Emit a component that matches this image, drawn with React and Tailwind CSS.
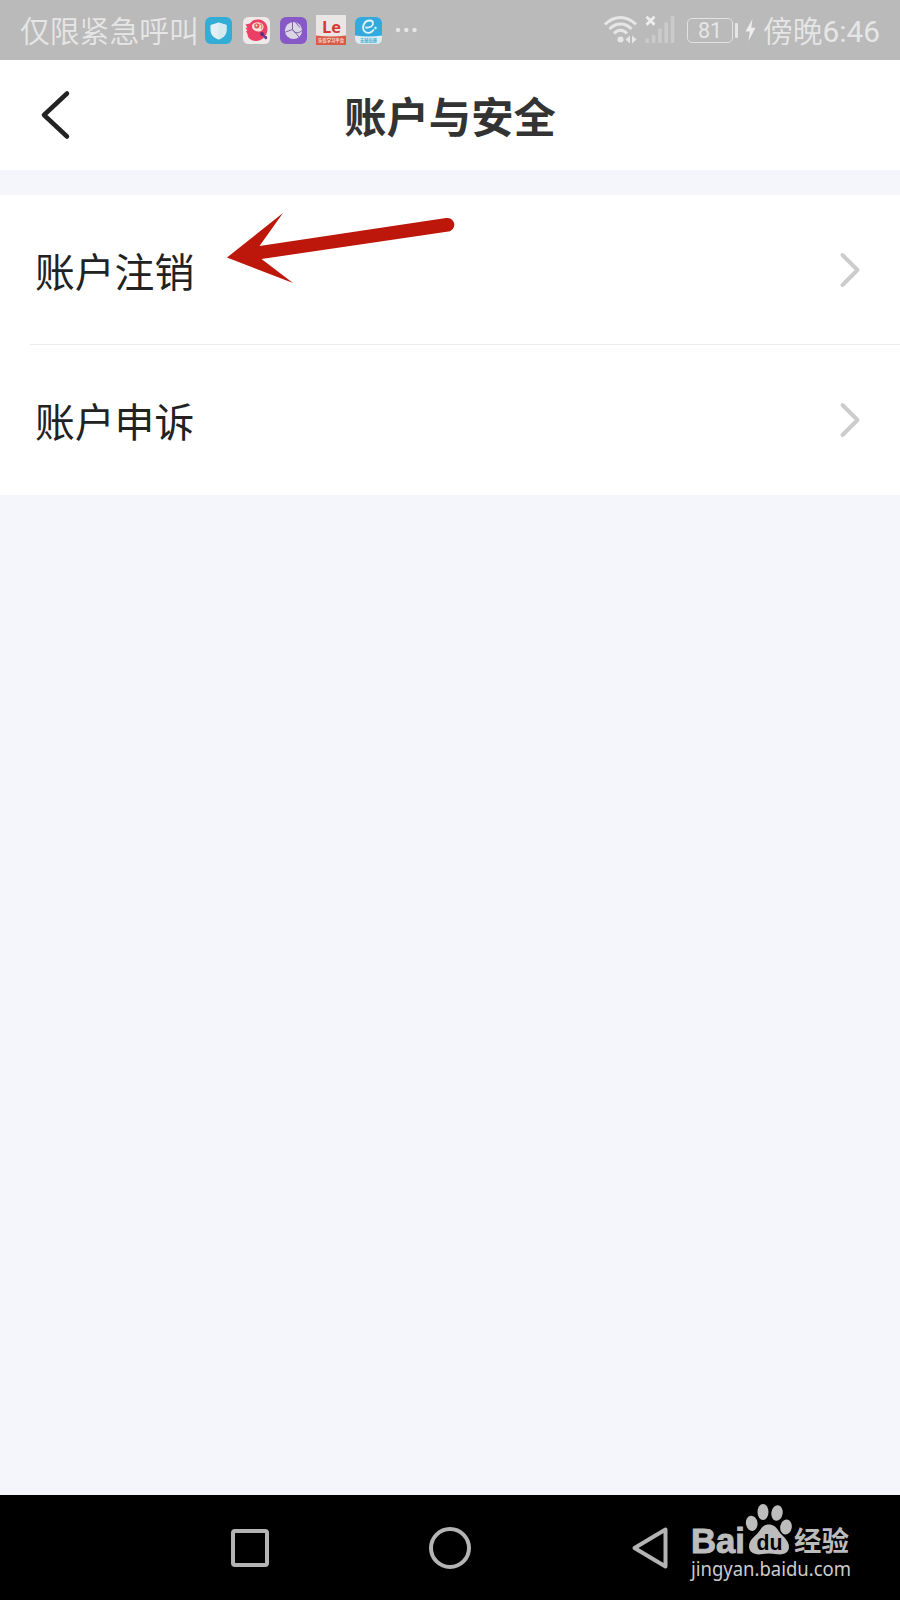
const statusFont = "font-['Roboto','Noto_Sans_CJK_SC',sans-serif]";

function ShieldIcon() {
  return (
    <svg width="27" height="27" viewBox="0 0 27 27">
      <rect width="27" height="27" rx="6" fill="#32add6" />
      <path d="M13.5 5.5 L21.5 8 V13 C21.5 18.5 17 21.5 13.5 22.5 C10 21.5 5.5 18.5 5.5 13 V8 Z" fill="#e2f0f4" />
      <path d="M13.5 5.5 L21.5 8 V13 C21.5 18.5 17 21.5 13.5 22.5 Z" fill="#d5e9f0" />
    </svg>
  );
}

function BirdIcon() {
  return (
    <svg width="27" height="27" viewBox="0 0 27 27">
      <rect width="27" height="27" rx="5.5" fill="#efe9e9" />
      <path
        d="M2.5 7.5 L7 6.500 C9 3.5 12 2 16 2.5 C21 3 24.5 7 24.5 12 C24.5 19 19 24 13 24 C8 24 4.5 21 4.5 17 L3 14 L4.500 13.500 L2.500 11 L4.500 10.500 Z"
        fill="#ec3f64"
      />
      <path d="M9 9 C9 4.500 19 3.500 20.500 9 C21 12 18 15 15 14.500 C11 14 9 12 9 9 Z" fill="#f3e4e4" />
      <circle cx="13.800" cy="8.800" r="2.600" fill="#e0554f" />
      <circle cx="13.500" cy="8.500" r="1" fill="#f3e4e4" />
      <path d="M16.500 7 C19 7 19.500 10 18 12" fill="none" stroke="#e8874f" strokeWidth="1.3" />
      <path d="M18 15.500 L23.500 22" stroke="#6a3690" strokeWidth="1.8" />
      <circle cx="19" cy="17" r="1.9" fill="#5b2e86" />
      <circle cx="22.7" cy="20.5" r="1.4" fill="#6a3690" />
    </svg>
  );
}

function GlobeIcon() {
  return (
    <svg width="27" height="27" viewBox="0 0 27 27">
      <rect width="27" height="27" rx="6" fill="#8759c6" />
      <circle cx="13.5" cy="13.5" r="8.6" fill="#dcd5e6" />
      <g fill="none" stroke="#7c62a5" strokeWidth="1">
        <path d="M12.500 5 V12.500 L5.500 15" />
        <path d="M12.500 12.500 L19 20" />
        <path d="M12.500 12.500 C15 17 19 16.500 22 13.500" />
        <path d="M15.500 5.500 L20 10.500" />
      </g>
    </svg>
  );
}

function LeIcon() {
  return (
    <svg width="30" height="30" viewBox="0 0 30 30">
      <rect width="30" height="30" fill="#e9e6e5" />
      <path d="M0 20.500 Q15 22.500 30 20.500 V30 H0 Z" fill="#dc5a45" />
      <text x="6" y="17.5" textLength="19" lengthAdjust="spacingAndGlyphs" className="font-['Open_Sans',sans-serif] text-[15.500px] font-bold" fill="#d33a34">
        Le
      </text>
      <text x="2" y="27" textLength="26" lengthAdjust="spacingAndGlyphs" className="font-['Noto_Sans_CJK_SC',sans-serif] text-[4.500px] font-bold" fill="#f4dcd6">
        乐信学习平台
      </text>
    </svg>
  );
}

function EIcon() {
  return (
    <svg width="27" height="27" viewBox="0 0 27 27">
      <rect width="27" height="27" rx="6" fill="#31abdd" />
      <path d="M0 18.500 Q13.5 20.500 27 18.500 V21 C27 25 25 27 21 27 H6 C2 27 0 25 0 21 Z" fill="#dcebf0" />
      <path
        d="M11 10.500 C15 11 18.500 9 18 6 C17.500 2.500 11.500 2.500 9 7 C6.500 12 9.500 16.500 14 15.800 C16 15.500 17.500 14.500 18.500 13"
        fill="none"
        stroke="#e4f1f5"
        strokeWidth="1.8"
        strokeLinecap="round"
      />
      <circle cx="20.500" cy="11" r="1.200" fill="#e4f1f5" />
      <text x="5" y="25" textLength="17" lengthAdjust="spacingAndGlyphs" className="font-['Noto_Sans_CJK_SC',sans-serif] text-[4.5px] font-bold" fill="#46aed3">
        无秘出册
      </text>
    </svg>
  );
}

function WifiIcon() {
  return (
    <svg width="34" height="30" viewBox="0 0 34 30">
      <g fill="none" stroke="#e6e6e6" strokeWidth="3">
        <path d="M1 9.500 C10 0 23 0 32 9.500" />
        <path d="M5.500 14 C12 7.300 21 7.300 27.500 14" />
        <path d="M10 18.500 C14 14.300 19 14.300 23 18.500" />
      </g>
      <circle cx="16.500" cy="24.500" r="3" fill="#e6e6e6" />
      <path d="M26 20.500 V28.500 L21.500 24.500 Z M28 20.500 V28.500 L32.500 24.500 Z" fill="#e6e6e6" />
    </svg>
  );
}

function SignalIcon() {
  return (
    <svg width="30" height="30" viewBox="0 0 30 30">
      <path d="M1.500 1.800 L9.500 9.800 M9.500 1.800 L1.500 9.800" stroke="#ededed" strokeWidth="2.8" />
      <g fill="#cbcbcb">
        <rect x="0.500" y="23.500" width="3.500" height="4.500" />
        <rect x="6.800" y="20" width="3.500" height="8" />
        <rect x="13.200" y="13.500" width="3.500" height="14.500" />
        <rect x="19.500" y="7.500" width="3.500" height="20.500" />
        <rect x="25.800" y="1" width="3.500" height="27" />
      </g>
    </svg>
  );
}

function StatusBar() {
  return (
    <div className={`flex h-[60px] items-center bg-[#bababa] pl-[20px] pr-[19px] text-[#e6e6e6] ${statusFont}`}>
      <span className="w-[185px] whitespace-nowrap pt-[4px] text-[29.800px] font-[350] leading-[56px]">仅限紧急呼叫</span>
      <div className="flex items-center">
        <ShieldIcon />
        <div className="ml-[10.500px]"><BirdIcon /></div>
        <div className="ml-[10.500px]"><GlobeIcon /></div>
        <div className="ml-[9px]"><LeIcon /></div>
        <div className="ml-[9px]"><EIcon /></div>
        <svg className="ml-[13px]" width="22" height="6" viewBox="0 0 22 6" fill="#e6e6e6">
          <circle cx="3" cy="3" r="2.200" />
          <circle cx="11.300" cy="3" r="2.200" />
          <circle cx="19.500" cy="3" r="2.200" />
        </svg>
      </div>
      <div className="ml-auto flex items-center">
        <WifiIcon />
        <div className="ml-[7px]"><SignalIcon /></div>
        <div className="ml-[12px] flex h-[25px] w-[46px] items-center justify-center rounded-[5px] border-[1.500px] border-[#e2e2e2] pt-[1px] text-[21.500px] leading-none">
          81
        </div>
        <div className="ml-[1.500px] h-[15px] w-[3.500px] rounded-[1px] bg-[#e6e6e6]" />
        <svg className="ml-[7px]" width="11" height="22" viewBox="0 0 11 22">
          <path d="M7.500 0 L0.500 12.500 H4.800 L3.500 22 L10.500 8.800 H6.300 Z" fill="#ededed" />
        </svg>
        <span className="ml-[7px] w-[118px] whitespace-nowrap pt-[4px] text-[29.800px] font-[350] leading-[56px]">
          傍晚<span className="font-normal">6:46</span>
        </span>
      </div>
    </div>
  );
}

function Header() {
  return (
    <header className="grid h-[110px] grid-cols-[1fr_auto_1fr] items-center bg-white">
      <svg className="ml-[40px]" width="32" height="50" viewBox="0 0 32 50">
        <path d="M27 3.500 L4 25 L27 46.500" fill="none" stroke="#222222" strokeWidth="4.500" strokeLinecap="round" strokeLinejoin="round" />
      </svg>
      <h1 className="pt-[1px] text-[42.300px] font-bold leading-none text-[#333333]">账户与安全</h1>
    </header>
  );
}

function Row({ label }) {
  return (
    <div className="flex h-[149px] items-center justify-between pl-[35px] pr-[39px]">
      <span className="text-[39.800px] leading-none text-[#222222]">{label}</span>
      <svg width="22" height="36" viewBox="0 0 22 36">
        <path d="M3.500 3 L18.500 18 L3.500 33" fill="none" stroke="#cccccc" strokeWidth="3.900" strokeLinecap="round" strokeLinejoin="round" />
      </svg>
    </div>
  );
}

function PointerArrow() {
  return (
    <svg className="absolute left-[225px] top-[210px]" width="232" height="76" viewBox="0 0 232 76">
      <path
        d="M2 47.500 L58 3 L34.500 36 L221 8 C231 7 232 20 223.500 21.500 L36.500 49 L68 73 Z"
        fill="#bc170a"
      />
    </svg>
  );
}

function BaiduLogo() {
  return (
    <svg className="overflow-visible" width="164" height="84" viewBox="0 0 164 84" fill="#bcbcbc">
      <text
        x="3"
        y="48"
        textLength="54"
        lengthAdjust="spacingAndGlyphs"
        className="font-['Liberation_Sans',sans-serif] text-[35px] font-bold"
        stroke="#bcbcbc"
        strokeWidth="1"
      >
        Bai
      </text>
      <ellipse cx="63.700" cy="18.300" rx="5.800" ry="7.700" transform="rotate(-8 63.700 18.300)" />
      <ellipse cx="75" cy="7" rx="5.500" ry="8" />
      <ellipse cx="89" cy="8" rx="5.700" ry="7.800" transform="rotate(8 89 8)" />
      <ellipse cx="98" cy="22" rx="5.800" ry="7.500" transform="rotate(8 98 22)" />
      <path d="M80.500 19.500 C86 19.500 88.500 22.500 91 26.500 C94 31 101 35 101 42 C101 48 95 50 89 49.300 C83 48.300 78 48.300 73 49.300 C66 50 61 47 61 41.500 C61 34 68 31 71 26.500 C74 22 76 19.500 80.500 19.500 Z" />
      <text x="68.500" y="45" textLength="26" lengthAdjust="spacingAndGlyphs" className="font-['Liberation_Sans',sans-serif] text-[21.500px] font-bold" fill="#000000">
        du
      </text>
      <text x="106" y="46" textLength="55" lengthAdjust="spacingAndGlyphs" className="font-['Noto_Sans_CJK_SC',sans-serif] text-[27px] font-bold">
        经验
      </text>
      <text x="3" y="70.500" textLength="160" lengthAdjust="spacingAndGlyphs" className="font-['Noto_Sans',sans-serif] text-[20.500px]" fill="#cccccc">
        jingyan.baidu.com
      </text>
    </svg>
  );
}

function NavBar() {
  return (
    <nav className="flex h-[105px] items-center bg-black">
      <div className="ml-[231px] h-[38px] w-[38px] rounded-[4px] border-4 border-[#b4b4b4]" />
      <div className="ml-[160px] h-[42px] w-[42px] rounded-full border-4 border-[#b4b4b4]" />
      <svg className="ml-[160px]" width="38" height="44" viewBox="0 0 38 44">
        <path d="M34.500 3.500 V40.500 L3.500 22 Z" fill="none" stroke="#b4b4b4" strokeWidth="4" strokeLinejoin="round" />
      </svg>
      <div className="ml-[19px] mt-[-1px]">
        <BaiduLogo />
      </div>
    </nav>
  );
}

export default function App() {
  return (
    <div className="relative flex h-[1600px] w-[900px] flex-col overflow-hidden bg-[#f4f6fb] font-['Noto_Sans_CJK_SC',sans-serif]">
      <StatusBar />
      <Header />
      <main className="mt-[25px] flex-1">
        <div className="bg-white">
          <Row label="账户注销" />
          <div className="ml-[30px] h-px bg-[#ececec]" />
          <Row label="账户申诉" />
          <div className="h-px" />
        </div>
      </main>
      <NavBar />
      <PointerArrow />
    </div>
  );
}
